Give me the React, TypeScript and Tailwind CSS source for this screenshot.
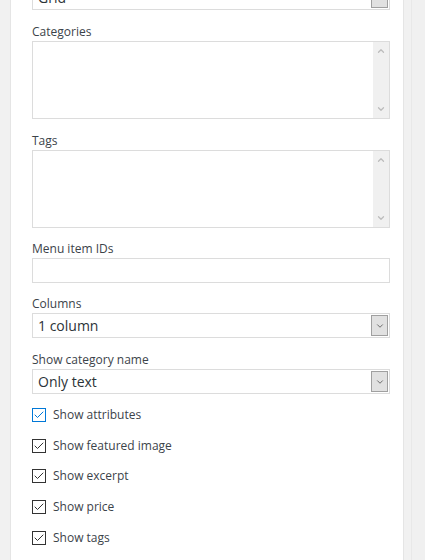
import { Check, ChevronDown, ChevronUp } from "lucide-react"

const font = { fontFamily: '"Open Sans", "Noto Sans", sans-serif' }

function Label({ text }: { text: string }) {
  return <div className="h-[18px] leading-[18px] text-[12px] text-[#3c434a]">{text}</div>
}

function Select({ value }: { value: string }) {
  return (
    <div className="flex h-[25px] border border-[#dcdcdc] bg-white">
      <div className="flex-1 pl-[5px] leading-[23px] text-[14px] text-[#2c3338]">{value}</div>
      <div className="my-px mr-px flex w-[17px] items-center justify-center border border-[#a0a0a0] bg-[#e1e1e1]">
        <ChevronDown className="h-[10px] w-[10px] text-[#555]" strokeWidth={2} />
      </div>
    </div>
  )
}

function ListBox() {
  return (
    <div className="flex h-[78px] border border-[#dcdcdc] bg-white">
      <div className="flex-1" />
      <div className="flex w-[16px] flex-col items-center justify-between bg-[#f0f0f0] py-[4px]">
        <ChevronUp className="h-[10px] w-[10px] text-[#bcbcbc]" strokeWidth={3} />
        <ChevronDown className="h-[10px] w-[10px] text-[#bcbcbc]" strokeWidth={3} />
      </div>
    </div>
  )
}

function CheckRow({ text, focused }: { text: string; focused?: boolean }) {
  return (
    <div className="flex h-[30.6px] items-center gap-[7px]">
      <div
        className={`flex h-[14px] w-[14px] items-center justify-center border ${
          focused ? "border-[#0078d7]" : "border-[#333]"
        } bg-white`}
      >
        <Check
          className={`h-[12px] w-[12px] ${focused ? "text-[#0078d7]" : "text-[#333]"}`}
          strokeWidth={2}
        />
      </div>
      <span className="text-[12px] text-[#3c434a]">{text}</span>
    </div>
  )
}

export default function App() {
  return (
    <div className="flex h-[560px] overflow-hidden bg-[#f1f1f1]" style={font}>
      <div className="ml-[10px] w-[394px] border-x border-[#e5e5e5] bg-white pl-[21px] pr-[13px]">
        <div className="-mt-[15px]">
          <Select value="Grid" />
        </div>

        <div className="mt-[13px]">
          <Label text="Categories" />
          <ListBox />
        </div>

        <div className="mt-[13px]">
          <Label text="Tags" />
          <ListBox />
        </div>

        <div className="mt-[12px]">
          <Label text="Menu item IDs" />
          <div className="h-[25px] border border-[#dcdcdc] bg-white" />
        </div>

        <div className="mt-[12px]">
          <Label text="Columns" />
          <Select value="1 column" />
        </div>

        <div className="mt-[13px]">
          <Label text="Show category name" />
          <Select value="Only text" />
        </div>

        <div className="mt-[6px]">
          <CheckRow text="Show attributes" focused />
          <CheckRow text="Show featured image" />
          <CheckRow text="Show excerpt" />
          <CheckRow text="Show price" />
          <CheckRow text="Show tags" />
        </div>
      </div>
      <div className="w-[7px]" />
      <div className="flex-1 border-l border-[#e8e8e8] bg-[#f0f0f0]" />
    </div>
  )
}
